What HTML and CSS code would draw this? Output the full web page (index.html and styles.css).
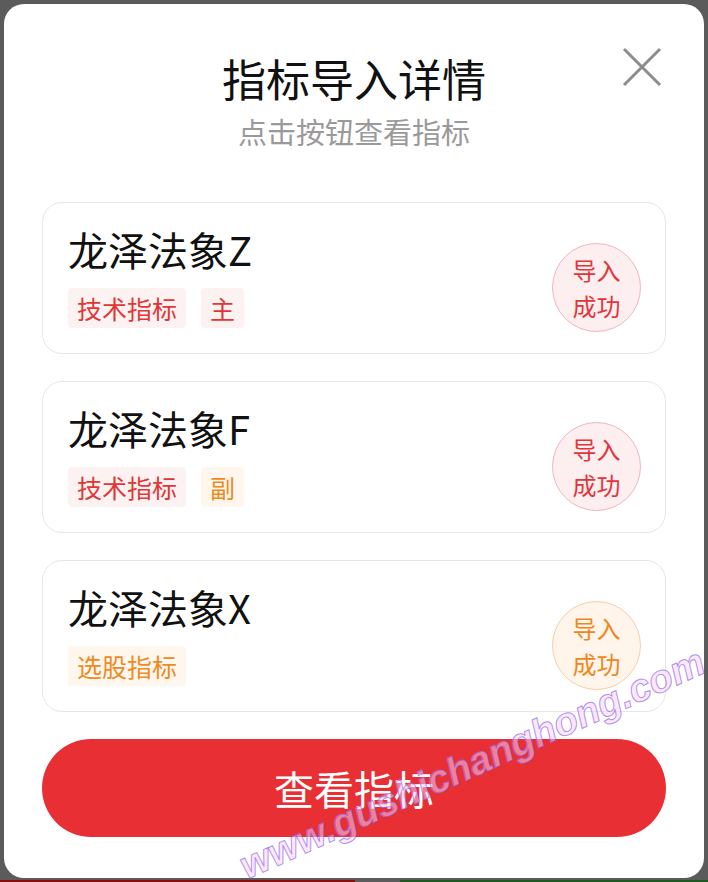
FILE: index.html
```html
<!DOCTYPE html>
<html lang="zh-CN">
<head>
<meta charset="utf-8">
<title>指标导入详情</title>
<link rel="stylesheet" href="styles.css">
</head>
<body>
<div class="modal">
  <div class="header">
    <h1 class="title">指标导入详情</h1>
    <p class="subtitle">点击按钮查看指标</p>
    <button class="close" aria-label="关闭">
      <svg width="40" height="40" viewBox="0 0 40 40"><path d="M2 2 L38 38 M38 2 L2 38" stroke="#8c8c8c" stroke-width="3" fill="none"/></svg>
    </button>
  </div>
  <div class="list">
    <div class="card">
      <div class="info">
        <div class="name">龙泽法象Z</div>
        <div class="tags"><span class="tag red">技术指标</span><span class="tag red">主</span></div>
      </div>
      <div class="badge red">导入<br>成功</div>
    </div>
    <div class="card">
      <div class="info">
        <div class="name">龙泽法象F</div>
        <div class="tags"><span class="tag red">技术指标</span><span class="tag orange">副</span></div>
      </div>
      <div class="badge red">导入<br>成功</div>
    </div>
    <div class="card">
      <div class="info">
        <div class="name">龙泽法象X</div>
        <div class="tags"><span class="tag orange">选股指标</span></div>
      </div>
      <div class="badge orange">导入<br>成功</div>
    </div>
  </div>
  <button class="primary">查看指标</button>
</div>
<div class="watermark">www.gushichanghong.com</div>
</body>
</html>
```
FILE: styles.css
```css
html, body {
  margin: 0;
  padding: 0;
}
body {
  width: 708px;
  height: 882px;
  overflow: hidden;
  position: relative;
  font-family: "Noto Sans CJK SC", "Noto Sans", sans-serif;
  background:
    linear-gradient(to right, #8a0d0d 0 355px, #5c5c5c 355px 400px, #1c5a22 400px) left bottom / 100% 2px no-repeat,
    #5b5b5b;
}
.modal {
  position: relative;
  margin: 4px 4px 0;
  height: 874px;
  box-sizing: border-box;
  background: #fff;
  border-radius: 20px;
  padding: 48px 38px 40px;
  display: flex;
  flex-direction: column;
}
.header {
  text-align: center;
}
.title {
  margin: 0;
  font-size: 44px;
  line-height: 52px;
  font-weight: 400;
  color: #111;
}
.subtitle {
  margin: 9px 0 0;
  font-size: 29px;
  line-height: 36px;
  color: #9a9a9a;
}
.close {
  position: absolute;
  right: 42px;
  top: 43px;
  width: 40px;
  height: 40px;
  padding: 0;
  border: 0;
  background: none;
}
.close svg { display: block; }
.list {
  margin-top: 53px;
  display: flex;
  flex-direction: column;
  gap: 27px;
}
.card {
  height: 152px;
  box-sizing: border-box;
  border: 1px solid #e6e6e6;
  border-radius: 20px;
  padding: 22px 24px 0 25px;
  display: flex;
  justify-content: space-between;
  align-items: flex-start;
}
.name {
  font-size: 40px;
  line-height: 48px;
  color: #111;
}
.tags {
  margin-top: 15px;
  display: flex;
  gap: 15px;
}
.tag {
  height: 40px;
  line-height: 40px;
  padding: 0 9px;
  font-size: 25px;
  border-radius: 4px;
}
.tag.red { color: #e23636; background: #fdf2f2; }
.tag.orange { color: #ef8a1f; background: #fff7ee; }
.badge {
  margin-top: 18px;
  width: 89px;
  height: 89px;
  box-sizing: border-box;
  border-radius: 50%;
  display: flex;
  align-items: center;
  justify-content: center;
  text-align: center;
  font-size: 24px;
  line-height: 36px;
}
.badge.red { color: #e2353a; background: #fdeef0; border: 1px solid #eeb7bc; }
.badge.orange { color: #ef861c; background: #fff5ea; border: 1px solid #f3cfa6; }
.primary {
  margin-top: 27px;
  height: 98px;
  border: 0;
  border-radius: 49px;
  background: #e83034;
  color: #fff;
  font-family: inherit;
  font-size: 40px;
}
.watermark {
  position: absolute;
  left: 250px;
  top: 846px;
  transform-origin: 0 100%;
  transform: rotate(-24.3deg);
  font-family: "Liberation Sans", sans-serif;
  font-weight: 700;
  font-style: italic;
  font-size: 39px;
  line-height: 40px;
  white-space: nowrap;
  color: rgba(250, 210, 250, 0.5);
  -webkit-text-stroke: 1px rgba(140, 100, 235, 0.7);
  pointer-events: none;
}
```
